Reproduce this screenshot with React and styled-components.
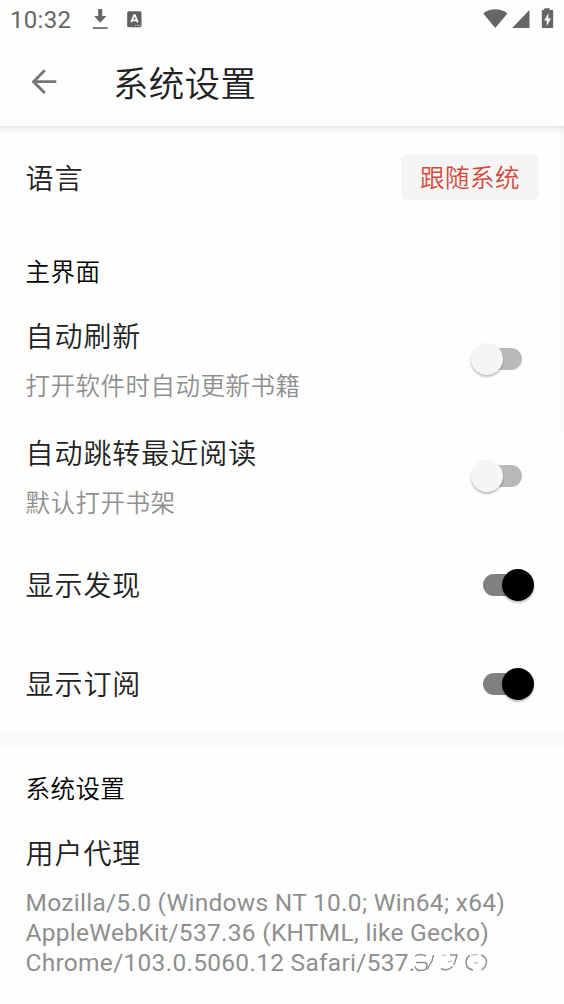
import styled, { createGlobalStyle } from "styled-components";

const GlobalStyle = createGlobalStyle`
  * {
    box-sizing: border-box;
  }
  body {
    margin: 0;
    background: #fefefe;
  }
  p, h1, h2 {
    margin: 0;
    font-weight: 400;
  }
`;

const Screen = styled.div`
  position: relative;
  width: 564px;
  height: 1004px;
  overflow: hidden;
  background: #fefefe;
  color: #212121;
  font-family: Roboto, "Noto Sans CJK SC", sans-serif;
  display: flex;
  flex-direction: column;
`;

const StatusBar = styled.div`
  height: 38px;
  flex: none;
  padding: 0 10px;
  display: flex;
  align-items: center;
  justify-content: space-between;
  color: #666666;
  svg {
    display: block;
  }
`;

const StatusSide = styled.div`
  display: flex;
  align-items: center;
`;

const Clock = styled.span`
  width: 82px;
  padding-top: 2px;
  font-size: 24px;
  line-height: 36px;
  letter-spacing: 0.3px;
`;

const Gap = styled.div`
  width: 19px;
`;

const AppBar = styled.header`
  height: 88px;
  flex: none;
  padding-left: 30px;
  display: flex;
  align-items: center;
  background: #fefefe;
`;

const Title = styled.h1`
  margin-left: 55px;
  padding-top: 5px;
  font-size: 35.5px;
  font-weight: 350;
  line-height: 50px;
  letter-spacing: 0.3px;
`;

const BarShadow = styled.div`
  height: 9px;
  flex: none;
  margin-bottom: -9px;
  background: linear-gradient(
    rgba(0, 0, 0, 0.1) 0%,
    rgba(0, 0, 0, 0.04) 35%,
    rgba(0, 0, 0, 0) 100%
  );
`;

const Section = styled.section`
  padding: 0 25px;
`;

const Spacer = styled.div`
  height: ${(p) => p.$height}px;
`;

const Heading = styled.h2`
  height: ${(p) => p.$height}px;
  padding-left: 0.5px;
  color: #000000;
  font-size: 24.5px;
  font-weight: 350;
  line-height: 39px;
  letter-spacing: 0.44px;
`;

const Row = styled.div`
  height: ${(p) => p.$height}px;
  display: flex;
  align-items: center;
  justify-content: space-between;
`;

const Label = styled.p`
  padding: 5px 0 0 0.5px;
  font-size: 28px;
  font-weight: 350;
  line-height: 42px;
  letter-spacing: 0.95px;
`;

const Note = styled.p`
  margin-top: ${(p) => p.$gap || 9}px;
  padding-left: 0.5px;
  color: #8f8f8f;
  font-size: 24.5px;
  font-weight: 350;
  line-height: 38px;
  letter-spacing: 0.5px;
`;

const AgentNote = styled(Note)`
  position: relative;
  font-weight: 400;
  line-height: 30px;
  letter-spacing: 0.28px;
  white-space: pre-line;
`;

const LanguageButton = styled.button`
  width: 138px;
  height: 46px;
  padding: 3px 0 0;
  border: none;
  border-radius: 7px;
  background: #f5f5f5;
  color: #d5493b;
  font-family: inherit;
  font-size: 24.5px;
  font-weight: 350;
  line-height: 43px;
  letter-spacing: 0.44px;
`;

const Track = styled.div`
  width: 40px;
  height: 22px;
  margin-right: ${(p) => (p.$on ? 16 : 17)}px;
  margin-top: 1px;
  border-radius: 11px;
  background: ${(p) => (p.$on ? "#808080" : "#b9b9b9")};
  display: flex;
  align-items: center;
  justify-content: ${(p) => (p.$on ? "flex-end" : "flex-start")};
`;

const Thumb = styled.div`
  width: 32px;
  height: 32px;
  flex: none;
  margin: 0 ${(p) => (p.$on ? -10.5 : -11.5)}px;
  border-radius: 50%;
  background: ${(p) => (p.$on ? "#000000" : "#f5f5f5")};
  box-shadow: 0 2px 2px rgba(0, 0, 0, 0.2), 0 1px 3px rgba(0, 0, 0, 0.08);
`;

const Divider = styled.div`
  height: 12px;
  flex: none;
  background: #f8f8f8;
`;

const EdgeShade = styled.div`
  position: absolute;
  top: 126px;
  right: 0;
  width: 5px;
  height: 306px;
  background: rgba(0, 0, 0, 0.016);
`;

const Fragments = styled.svg`
  position: absolute;
  left: 387px;
  top: 62px;
`;

const Switch = ({ on }) => (
  <Track $on={on}>
    <Thumb $on={on} />
  </Track>
);

const DownloadIcon = () => (
  <svg width="16" height="22" viewBox="0 0 16 22" fill="#666666">
    <path d="M6.2 1h4v7h4.2L8.2 14.8 2.1 8h4.1z" />
    <path d="M0.8 19.2h14.9v1.7H0.8z" />
  </svg>
);

const InputIcon = () => (
  <svg width="15" height="17" viewBox="0 0 15 17">
    <rect x="0.2" y="0.3" width="14.3" height="16" rx="1.5" fill="#606060" />
    <path
      d="M4.2 11.4 7.1 4.2h.8l2.9 7.2M5.2 9.3h4.6"
      fill="none"
      stroke="#fefefe"
      strokeWidth="1.7"
    />
    <path d="M8 14.4h5.5" stroke="#c8c8c8" strokeDasharray="1.3 0.8" />
  </svg>
);

const SystemIcons = () => (
  <svg width="72" height="22" viewBox="0 0 72 22" fill="#666666">
    <path d="M1.2 5.4C8.2-.1 18.4-.1 25.4 5.4L13.3 20z" />
    <path d="M47.5 3.2V20H30.2L46.2 3.2q1.3-1.2 1.3 0z" />
    <path d="M62.3 0.2h5.4v1.8h2.6q.9 0 .9.9v16.2q0 .9-.9.9H60.7q-.9 0-.9-.9v-16.2q0-.9.9-.9h1.6z" />
    <path d="M66.4 5.2v5.3h2.4l-4 7.7v-5.7h-2.6z" fill="#fefefe" />
  </svg>
);

const BackIcon = () => (
  <svg width="28" height="28" viewBox="0 0 28 28">
    <path
      d="M26.3 13.7H3.6M14.8 2.3 3.5 13.7l11.3 11.4"
      fill="none"
      stroke="#757575"
      strokeWidth="2.8"
    />
  </svg>
);

// broken strokes left where the last characters are washed out
const FadedTail = () => (
  <Fragments
    width="76"
    height="22"
    viewBox="412 950 76 22"
    fill="none"
    stroke="#8c8c8c"
    strokeWidth="1.4"
  >
    <path d="M415 956q5-3 11 0M416 962.500h8q3 0 3 3 0 5-6 5-5 0-6-4" />
    <path d="M433.500 955l-1.500 6-3 5-2 3.500" />
    <path d="M450 955h7l-2 7-1.500 3M441 968.500q5 2.500 9 0l2.500-2" />
    <path d="M442 956l4-1.500M448 962l4-1" stroke="#c8c8c8" />
    <path d="M470 955.500q-4 2-4 7l1 4q2 3 6 3.500M481 955q5 2 5.500 6 0 6-5 9" />
    <path d="M471 955l7-.5M474 962.500l4 .5" stroke="#c8c8c8" />
  </Fragments>
);

export default function App() {
  return (
    <Screen>
      <GlobalStyle />
      <StatusBar>
        <StatusSide>
          <Clock>10:32</Clock>
          <DownloadIcon />
          <Gap />
          <InputIcon />
        </StatusSide>
        <SystemIcons />
      </StatusBar>
      <AppBar>
        <BackIcon />
        <Title>系统设置</Title>
      </AppBar>
      <BarShadow />
      <Section>
        <Row $height={102}>
          <Label>语言</Label>
          <LanguageButton>跟随系统</LanguageButton>
        </Row>
        <Spacer $height={25} />
        <Heading $height={47}>主界面</Heading>
        <Row $height={117}>
          <div>
            <Label>自动刷新</Label>
            <Note>打开软件时自动更新书籍</Note>
          </div>
          <Switch />
        </Row>
        <Row $height={117}>
          <div>
            <Label>自动跳转最近阅读</Label>
            <Note>默认打开书架</Note>
          </div>
          <Switch />
        </Row>
        <Row $height={100}>
          <Label>显示发现</Label>
          <Switch on />
        </Row>
        <Row $height={98}>
          <Label>显示订阅</Label>
          <Switch on />
        </Row>
      </Section>
      <Spacer $height={1} />
      <Divider />
      <Section>
        <Spacer $height={25} />
        <Heading $height={59}>系统设置</Heading>
        <Label>用户代理</Label>
        <AgentNote $gap={12}>
          {
            "Mozilla/5.0 (Windows NT 10.0; Win64; x64)\nAppleWebKit/537.36 (KHTML, like Gecko)\nChrome/103.0.5060.12 Safari/537."
          }
          <FadedTail />
        </AgentNote>
      </Section>
      <EdgeShade />
    </Screen>
  );
}
